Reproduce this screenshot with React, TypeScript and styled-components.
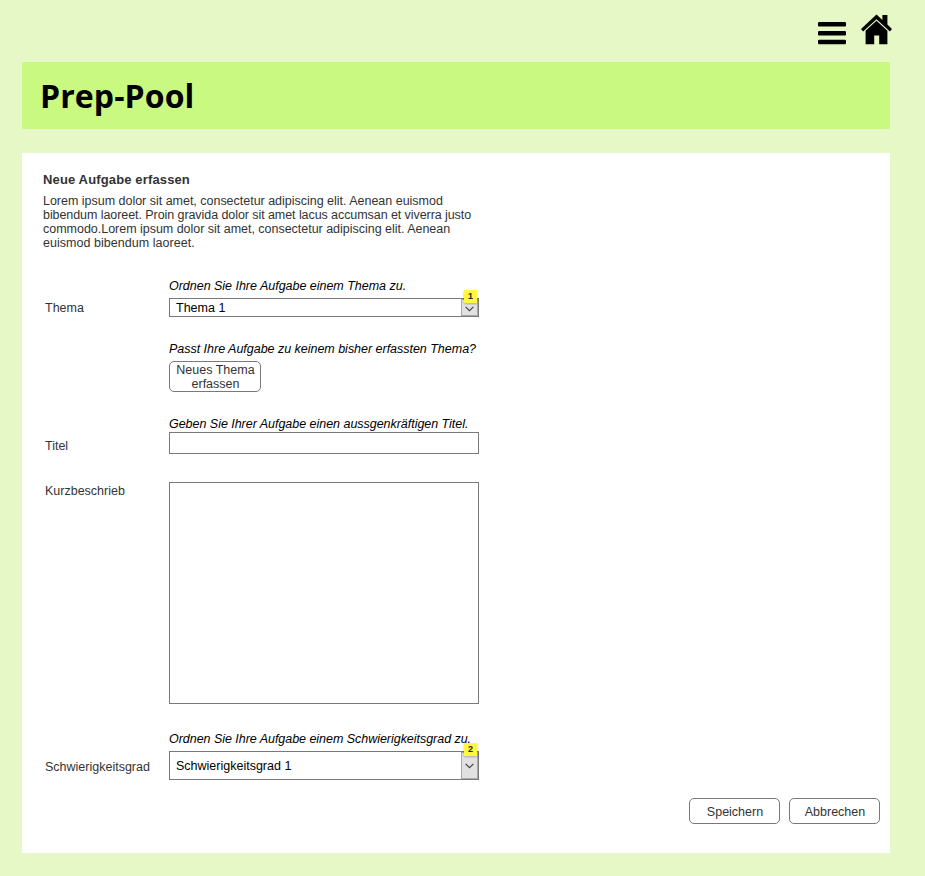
import React from "react";
import styled, { createGlobalStyle } from "styled-components";

const GlobalStyle = createGlobalStyle`
  * { box-sizing: border-box; }
  body {
    margin: 0;
    background: #e6f8c6;
    font-family: "Liberation Sans", Arial, sans-serif;
    font-size: 12.5px;
    line-height: 14px;
    color: #333;
  }
`;

const Page = styled.div`
  min-height: 876px;
  padding: 0 35px 23px 22px;
`;

const TopBar = styled.nav`
  display: flex;
  justify-content: flex-end;
  align-items: flex-start;
  gap: 15px;
  height: 62px;
  padding-top: 14px;
  margin-right: -2px;
`;

const IconButton = styled.a<{ $drop?: number }>`
  display: block;
  line-height: 0;
  padding-top: ${(p) => p.$drop ?? 0}px;
  color: #000;
`;

const Banner = styled.header`
  display: flex;
  align-items: center;
  height: 67px;
  padding-left: 18px;
  background: #caf982;
`;

const BannerTitle = styled.h1`
  margin: 0;
  font-family: "Open Sans", "Noto Sans", sans-serif;
  font-size: 32px;
  font-weight: 700;
  line-height: 43px;
  letter-spacing: 0.1px;
  color: #000;
`;

const Panel = styled.main`
  height: 700px;
  margin-top: 24px;
  padding: 19px 10px 0 21px;
  background: #fff;
`;

const Heading = styled.h2`
  margin: 0;
  font-size: 13px;
  line-height: 15px;
  letter-spacing: 0.14px;
`;

const Intro = styled.p`
  margin: 7px 0 29px;
`;

const Line = styled.span<{ $track: number }>`
  display: block;
  white-space: nowrap;
  letter-spacing: ${(p) => p.$track}px;
`;

const Row = styled.div<{ $gap: number }>`
  display: grid;
  grid-template-columns: 124px 310px;
  padding-left: 2px;
  margin-bottom: ${(p) => p.$gap}px;
`;

const Label = styled.label<{ $top: number }>`
  padding-top: ${(p) => p.$top}px;
  white-space: nowrap;
`;

const Field = styled.div`
  display: flex;
  flex-direction: column;
  align-items: flex-start;
`;

const Hint = styled.div<{ $gap: number; $track: number }>`
  height: 14px;
  margin-bottom: ${(p) => p.$gap}px;
  font-style: italic;
  white-space: nowrap;
  letter-spacing: ${(p) => p.$track}px;
  color: #000;
`;

const SelectBox = styled.div<{ $height: number }>`
  position: relative;
  display: flex;
  justify-content: space-between;
  align-items: center;
  width: 310px;
  height: ${(p) => p.$height}px;
  padding-left: 6px;
  border: 1px solid #797979;
  background: #fff;
  color: #000;
`;

const Arrow = styled.span<{ $shift: number }>`
  display: flex;
  align-items: center;
  justify-content: center;
  align-self: stretch;
  width: 17px;
  padding-top: ${(p) => p.$shift}px;
  border: 1px solid #a8a8a8;
  background: #e1e1e1;
`;

const Note = styled.span`
  position: absolute;
  top: -9px;
  right: 1px;
  width: 13px;
  height: 13px;
  background: #fff740;
  box-shadow: 0 1px 2px rgba(0, 0, 0, 0.25);
  font-size: 9px;
  font-weight: bold;
  line-height: 13px;
  text-align: center;
  color: #222;
`;

const TextInput = styled.input`
  display: block;
  width: 310px;
  height: 22px;
  padding: 0 6px;
  border: 1px solid #797979;
  outline: none;
  font: inherit;
`;

const TextArea = styled.textarea`
  display: block;
  width: 310px;
  height: 222px;
  padding: 6px;
  border: 1px solid #797979;
  outline: none;
  resize: none;
  font: inherit;
`;

const Button = styled.button<{ $width: number; $height: number }>`
  width: ${(p) => p.$width}px;
  height: ${(p) => p.$height}px;
  padding: 1px 0 0 1px;
  border: 1px solid #797979;
  border-radius: 5px;
  background: #fff;
  font: inherit;
  color: #333;
`;

const Actions = styled.div`
  display: flex;
  justify-content: flex-end;
  gap: 9px;
`;

const MenuIcon = () => (
  <svg width="28" height="23" viewBox="0 0 28 23" fill="currentColor">
    <rect y="0" width="28" height="4.4" rx="1.2" />
    <rect y="9" width="28" height="4.4" rx="1.2" />
    <rect y="17.8" width="28" height="4.4" rx="1.2" />
  </svg>
);

const HomeIcon = () => (
  <svg width="31" height="31" viewBox="0 0 31 31" fill="currentColor">
    <path d="M15.5 .5 21.4 6V1H26.4V10.6L31 15 28.9 17.6 15.5 5.2 2.1 17.6 0 15Z" />
    <path d="M15.5 6.8 26.4 16.8V30.2H18.2V21.4H13.2V30.2H4.6V16.8Z" />
  </svg>
);

const Chevron = () => (
  <svg width="9" height="6" viewBox="0 0 9 6" fill="none" stroke="#444" strokeWidth="1.2">
    <path d="M.6 .8 4.5 4.7 8.4 .8" />
  </svg>
);

type SelectProps = { value: string; note: number; height: number; shift?: number };

const Select = ({ value, note, height, shift = 0 }: SelectProps) => (
  <SelectBox $height={height}>
    {value}
    <Arrow $shift={shift}><Chevron /></Arrow>
    <Note>{note}</Note>
  </SelectBox>
);

export default function App() {
  return (
    <Page>
      <GlobalStyle />
      <TopBar>
        <IconButton $drop={8} aria-label="Menü"><MenuIcon /></IconButton>
        <IconButton aria-label="Startseite"><HomeIcon /></IconButton>
      </TopBar>
      <Banner><BannerTitle>Prep-Pool</BannerTitle></Banner>
      <Panel>
        <Heading>Neue Aufgabe erfassen</Heading>
        <Intro>
          <Line $track={-0.015}>Lorem ipsum dolor sit amet, consectetur adipiscing elit. Aenean euismod</Line>
          <Line $track={-0.07}>bibendum laoreet. Proin gravida dolor sit amet lacus accumsan et viverra justo</Line>
          <Line $track={-0.02}>commodo.Lorem ipsum dolor sit amet, consectetur adipiscing elit. Aenean</Line>
          <Line $track={0.04}>euismod bibendum laoreet.</Line>
        </Intro>
        <Row $gap={25}>
          <Label $top={22}>Thema</Label>
          <Field>
            <Hint $gap={5} $track={-0.02}>Ordnen Sie Ihre Aufgabe einem Thema zu.</Hint>
            <Select value="Thema 1" note={1} height={19} shift={3} />
          </Field>
        </Row>
        <Row $gap={25}>
          <span />
          <Field>
            <Hint $gap={5} $track={-0.02}>Passt Ihre Aufgabe zu keinem bisher erfassten Thema?</Hint>
            <Button $width={92} $height={31}>Neues Thema<br />erfassen</Button>
          </Field>
        </Row>
        <Row $gap={28}>
          <Label $top={22}>Titel</Label>
          <Field>
            <Hint $gap={1} $track={-0.03}>Geben Sie Ihrer Aufgabe einen aussgenkräftigen Titel.</Hint>
            <TextInput />
          </Field>
        </Row>
        <Row $gap={28}>
          <Label $top={2}>Kurzbeschrieb</Label>
          <TextArea />
        </Row>
        <Row $gap={18}>
          <Label $top={28}>Schwierigkeitsgrad</Label>
          <Field>
            <Hint $gap={5} $track={-0.035}>Ordnen Sie Ihre Aufgabe einem Schwierigkeitsgrad zu.</Hint>
            <Select value="Schwierigkeitsgrad 1" note={2} height={29} />
          </Field>
        </Row>
        <Actions>
          <Button $width={91} $height={26}>Speichern</Button>
          <Button $width={91} $height={26}>Abbrechen</Button>
        </Actions>
      </Panel>
    </Page>
  );
}
